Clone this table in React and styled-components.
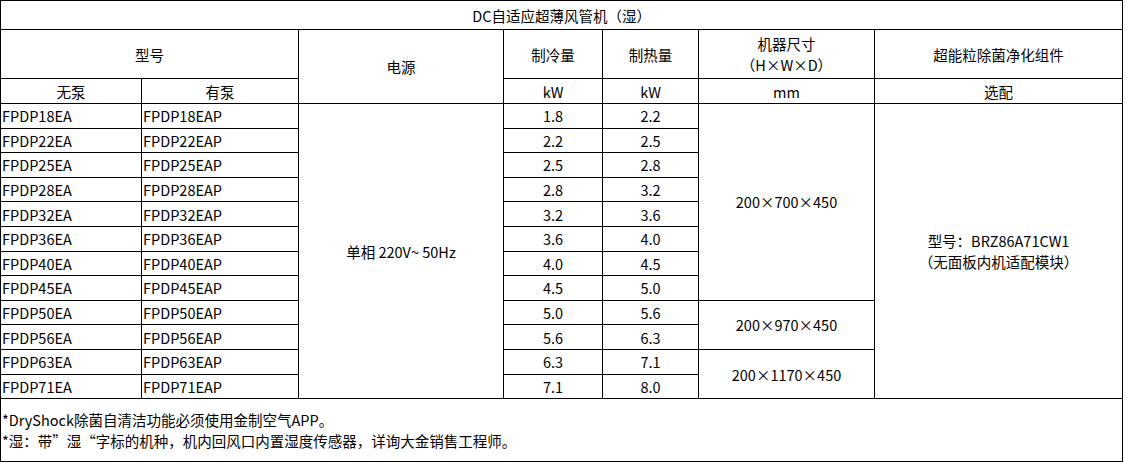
import React from 'react';
import styled, { createGlobalStyle } from 'styled-components';

const rows = [
	['FPDP18EA', 'FPDP18EAP', '1.8', '2.2'],
	['FPDP22EA', 'FPDP22EAP', '2.2', '2.5'],
	['FPDP25EA', 'FPDP25EAP', '2.5', '2.8'],
	['FPDP28EA', 'FPDP28EAP', '2.8', '3.2'],
	['FPDP32EA', 'FPDP32EAP', '3.2', '3.6'],
	['FPDP36EA', 'FPDP36EAP', '3.6', '4.0'],
	['FPDP40EA', 'FPDP40EAP', '4.0', '4.5'],
	['FPDP45EA', 'FPDP45EAP', '4.5', '5.0'],
	['FPDP50EA', 'FPDP50EAP', '5.0', '5.6'],
	['FPDP56EA', 'FPDP56EAP', '5.6', '6.3'],
	['FPDP63EA', 'FPDP63EAP', '6.3', '7.1'],
	['FPDP71EA', 'FPDP71EAP', '7.1', '8.0'],
];

// size cells that start on a given row index, with their rowspan
const sizes = {
	0: { text: '200×700×450', span: 8 },
	8: { text: '200×970×450', span: 2 },
	10: { text: '200×1170×450', span: 2 },
};

const colWidths = [141, 157, 205, 99, 96, 176, 248];

function App() {
	return (
		<>
			<GlobalStyle />
			<Table>
				<colgroup>
					{colWidths.map((w, i) => (
						<col key={i} style={{ width: w }} />
					))}
				</colgroup>
				<tbody>
					<TitleRow>
						<Cell colSpan={7}>DC自适应超薄风管机（湿）</Cell>
					</TitleRow>
					<HeadRow>
						<Cell colSpan={2}>型号</Cell>
						<Cell rowSpan={2}>电源</Cell>
						<Cell>制冷量</Cell>
						<Cell>制热量</Cell>
						<Cell>
							机器尺寸
							<br />
							（H×W×D）
						</Cell>
						<Cell>超能粒除菌净化组件</Cell>
					</HeadRow>
					<UnitRow>
						<Cell>无泵</Cell>
						<Cell>有泵</Cell>
						<Cell>kW</Cell>
						<Cell>kW</Cell>
						<Cell>mm</Cell>
						<Cell>选配</Cell>
					</UnitRow>
					{rows.map((r, i) => (
						<DataRow key={r[0]}>
							<Cell $align="left">{r[0]}</Cell>
							<Cell $align="left">{r[1]}</Cell>
							{i === 0 && <Cell rowSpan={12}>单相 220V~ 50Hz</Cell>}
							<Cell>{r[2]}</Cell>
							<Cell>{r[3]}</Cell>
							{sizes[i] && <Cell rowSpan={sizes[i].span}>{sizes[i].text}</Cell>}
							{i === 0 && (
								<Cell rowSpan={12}>
									型号：BRZ86A71CW1
									<br />
									（无面板内机适配模块）
								</Cell>
							)}
						</DataRow>
					))}
					<NoteRow>
						<Cell colSpan={7} $align="left">
							*DryShock除菌自清洁功能必须使用金制空气APP。
							<br />
							*湿：带”湿“字标的机种，机内回风口内置湿度传感器，详询大金销售工程师。
						</Cell>
					</NoteRow>
				</tbody>
			</Table>
		</>
	);
}

export default App;

// STYLES
const GlobalStyle = createGlobalStyle`
	body {
		margin: 0;
		background: #fff;
		font-family: "Noto Sans CJK SC", "Noto Sans", sans-serif;
		color: #000;
	}
`;

const Table = styled.table`
	width: 1122px;
	border-collapse: collapse;
	table-layout: fixed;
	font-size: 14.5px;
	line-height: 21px;
`;

const Cell = styled.td`
	border: 1px solid #000;
	padding: 0 1px;
	text-align: ${(p) => p.$align || 'center'};
	vertical-align: middle;
	white-space: nowrap;
	overflow: hidden;
`;

const TitleRow = styled.tr`
	height: 29px;
`;

const HeadRow = styled.tr`
	height: 49px;
`;

const UnitRow = styled.tr`
	height: 25px;
`;

const DataRow = styled.tr`
	height: 24.6px;
`;

const NoteRow = styled.tr`
	height: 63px;
`;
